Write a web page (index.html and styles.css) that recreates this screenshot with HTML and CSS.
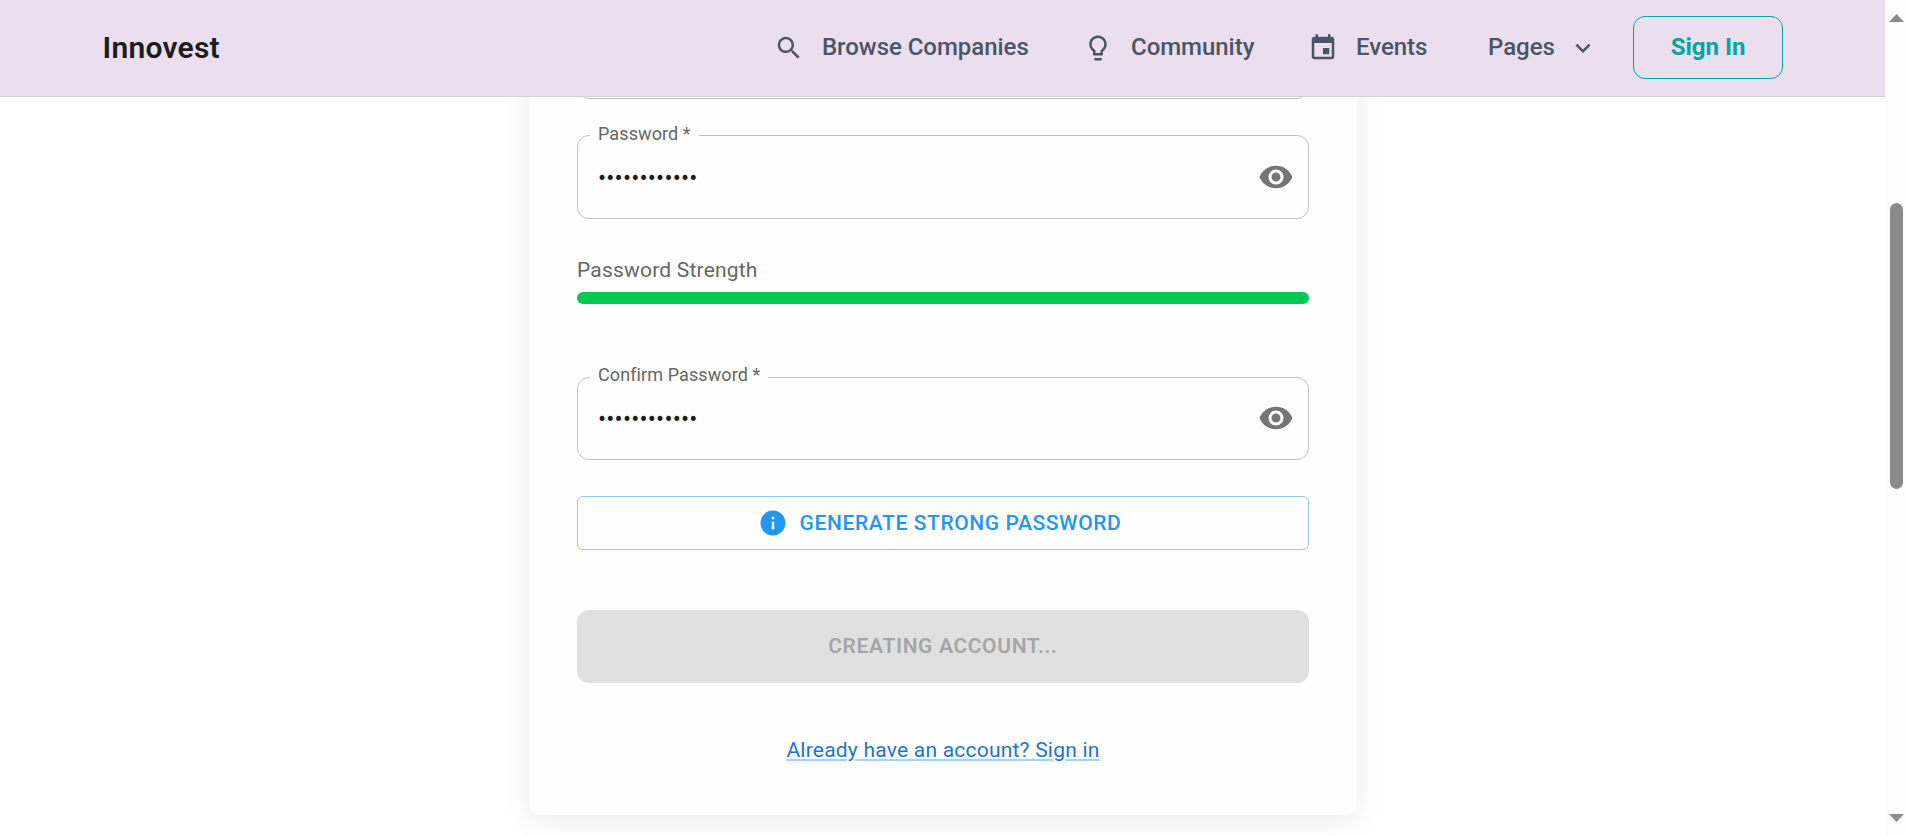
FILE: index.html
```html
<!DOCTYPE html>
<html lang="en">
<head>
<meta charset="utf-8">
<title>Innovest</title>
<link rel="stylesheet" href="styles.css">
</head>
<body>
<div class="app">
  <div class="page">
    <header class="header">
      <div class="logo">Innovest</div>
      <nav class="nav">
        <a class="nav-item browse"><svg class="icon" viewBox="0 0 24 24"><path d="M15.5 14h-.79l-.28-.27C15.41 12.59 16 11.11 16 9.5 16 5.91 13.09 3 9.5 3S3 5.91 3 9.5 5.91 16 9.5 16c1.61 0 3.09-.59 4.23-1.57l.27.28v.79l5 4.99L20.49 19l-4.99-5zm-6 0C7.01 14 5 11.99 5 9.5S7.01 5 9.5 5 14 7.01 14 9.5 11.99 14 9.5 14z"/></svg><span>Browse Companies</span></a>
        <a class="nav-item community"><svg class="icon" viewBox="0 0 24 24"><path d="M9 21c0 .55.45 1 1 1h4c.55 0 1-.45 1-1v-1H9v1zm3-19C8.14 2 5 5.14 5 9c0 2.38 1.19 4.47 3 5.74V17c0 .55.45 1 1 1h6c.55 0 1-.45 1-1v-2.26c1.81-1.27 3-3.36 3-5.74 0-3.86-3.14-7-7-7zm2.85 11.1-.85.6V16h-4v-2.3l-.85-.6C7.8 12.16 7 10.63 7 9c0-2.76 2.24-5 5-5s5 2.24 5 5c0 1.63-.8 3.16-2.15 4.1z"/></svg><span>Community</span></a>
        <a class="nav-item events"><svg class="icon" viewBox="0 0 24 24"><path d="M17 12h-5v5h5v-5zM16 1v2H8V1H6v2H5c-1.11 0-1.99.9-1.99 2L3 19c0 1.1.89 2 2 2h14c1.1 0 2-.9 2-2V5c0-1.1-.9-2-2-2h-1V1h-2zm3 18H5V8h14v11z"/></svg><span>Events</span></a>
        <a class="nav-item pages"><span>Pages</span><svg class="icon" viewBox="0 0 24 24"><path d="M7.41 8.59 12 13.17l4.59-4.58L18 10l-6 6-6-6 1.41-1.41z"/></svg></a>
        <a class="sign-in">Sign In</a>
      </nav>
    </header>
    <main class="content">
      <form class="card">
        <div class="field field-previous"></div>
        <fieldset class="field">
          <legend class="label">Password *</legend>
          <div class="control">
            <input class="input" type="password" value="abcdefghijkl" aria-label="Password">
            <svg class="eye" viewBox="0 0 24 24"><path d="M12 4.5C7 4.5 2.73 7.61 1 12c1.73 4.39 6 7.5 11 7.5s9.27-3.11 11-7.5c-1.73-4.39-6-7.5-11-7.5zM12 17c-2.76 0-5-2.24-5-5s2.24-5 5-5 5 2.24 5 5-2.24 5-5 5zm0-8c-1.66 0-3 1.34-3 3s1.34 3 3 3 3-1.34 3-3-1.34-3-3-3z"/></svg>
          </div>
        </fieldset>
        <div class="strength">
          <div class="strength-label">Password Strength</div>
          <div class="strength-bar"></div>
        </div>
        <fieldset class="field field-confirm">
          <legend class="label">Confirm Password *</legend>
          <div class="control">
            <input class="input" type="password" value="abcdefghijkl" aria-label="Confirm Password">
            <svg class="eye" viewBox="0 0 24 24"><path d="M12 4.5C7 4.5 2.73 7.61 1 12c1.73 4.39 6 7.5 11 7.5s9.27-3.11 11-7.5c-1.73-4.39-6-7.5-11-7.5zM12 17c-2.76 0-5-2.24-5-5s2.24-5 5-5 5 2.24 5 5-2.24 5-5 5zm0-8c-1.66 0-3 1.34-3 3s1.34 3 3 3 3-1.34 3-3-1.34-3-3-3z"/></svg>
          </div>
        </fieldset>
        <button class="generate" type="button"><svg class="info" viewBox="0 0 24 24"><path d="M12 2C6.48 2 2 6.48 2 12s4.480 10 10 10 10-4.480 10-10S17.520 2 12 2zm1 15h-2v-6h2v6zm0-8h-2V7h2v2z"/></svg><span>GENERATE STRONG PASSWORD</span></button>
        <button class="create" type="button" disabled>CREATING ACCOUNT...</button>
        <div class="link-row"><a class="link">Already have an account? Sign in</a></div>
      </form>
    </main>
  </div>
  <div class="scrollbar">
    <svg class="arrow" viewBox="0 0 15 8"><path d="M7.500 0 15 8H0z"/></svg>
    <div class="thumb"></div>
    <svg class="arrow" viewBox="0 0 15 8"><path d="M0 0h15L7.500 8z"/></svg>
  </div>
</div>
</body>
</html>
```
FILE: styles.css
```css
* { box-sizing: border-box; }
body { margin: 0; font-family: Roboto, "Liberation Sans", sans-serif; background: #fff; overflow: hidden; }
.app { display: flex; width: 1908px; height: 836px; }
.page { display: flex; flex-direction: column; width: 1885px; }
.header { display: flex; align-items: center; justify-content: space-between; flex: none; height: 97px; padding: 0 102px; background: #ebdeef; border-bottom: 1px solid #d8cadd; }
.logo { padding-left: 0.5px; font-size: 30px; font-weight: 600; letter-spacing: 0.25px; color: #1c1c1c; line-height: 1; }
.nav { display: flex; align-items: center; color: #4a5565; font-size: 24px; font-weight: 500; line-height: 36px; }
.nav-item { display: flex; align-items: center; }
.nav-item span { padding-bottom: 2px; letter-spacing: -0.03px; }
.icon { width: 30px; height: 30px; fill: #4a5565; }
.browse { gap: 18px; width: 309px; }
.community { gap: 18px; width: 225px; }
.events { gap: 18px; width: 180px; }
.pages { gap: 13px; width: 145px; }
.sign-in { display: flex; align-items: center; justify-content: center; width: 150px; height: 63px; margin-bottom: 1px; padding-bottom: 1px; border: 1px solid #00a6a6; border-radius: 12px; color: #00a6a6; font-weight: 700; }
.content { display: flex; justify-content: center; flex: 1; overflow: hidden; background: #fff; }
.card { display: flex; flex-direction: column; width: 828px; height: 818px; margin: -100px 0 0 1px; padding: 18px 48px 0; background: #fefefe; border-radius: 12px; box-shadow: 0 6px 30px rgba(0,0,0,.08); }
.field { flex: none; height: 93px; margin: 0 0 36px; padding: 0; border: 1px solid #c0c0c0; border-radius: 12px; min-width: 0; }
.field-previous { height: 84px; margin-bottom: 27px; }
.label { margin-left: 12px; padding: 0 8px; font-size: 18px; line-height: 16px; height: 18px; letter-spacing: 0.1px; color: #666; }
.field-confirm .label { height: 20px; }
.control { display: flex; align-items: center; height: 66px; padding: 0 14px 0 20px; }
.field-confirm .control { height: 62px; }
.input { flex: 1; min-width: 0; padding: 2px 0 0; border: 0; outline: 0; background: transparent; color: #1c1c1c; font: 24px Roboto, sans-serif; letter-spacing: 0.2px; }
.eye { width: 36px; height: 36px; fill: #757575; }
.strength { height: 112px; }
.strength-label { font-size: 21px; line-height: 30px; letter-spacing: 0.2px; color: #666; margin-bottom: 7px; }
.strength-bar { height: 12px; border-radius: 6px; background: #00c853; }
.generate { display: flex; align-items: center; justify-content: center; flex: none; gap: 12px; height: 54px; padding: 0; margin-bottom: 60px; background: transparent; border: 1px solid #90caf9; border-radius: 6px; color: #2196f3; font: 500 21px Roboto, sans-serif; letter-spacing: 0.6px; }
.info { width: 30px; height: 30px; margin-left: -7px; fill: #2196f3; }
.create { flex: none; height: 73px; padding: 0 0 2px; border: 0; border-radius: 12px; background: #e0e0e0; color: #a6a6a6; font: 600 21px Roboto, sans-serif; letter-spacing: 0.63px; }
.link-row { margin-top: 52px; text-align: center; font-size: 21px; line-height: 30px; letter-spacing: 0.22px; }
.link { color: #1976d2; text-decoration: underline #a3d3fa; }
.scrollbar { display: flex; flex-direction: column; align-items: center; width: 23px; padding: 14px 0; background: #fcfcfc; }
.arrow { width: 15px; height: 8px; fill: #8b8b8b; }
.thumb { width: 13px; height: 286px; margin: 181px 0 auto; border-radius: 7px; background: #8b8b8b; }
```
